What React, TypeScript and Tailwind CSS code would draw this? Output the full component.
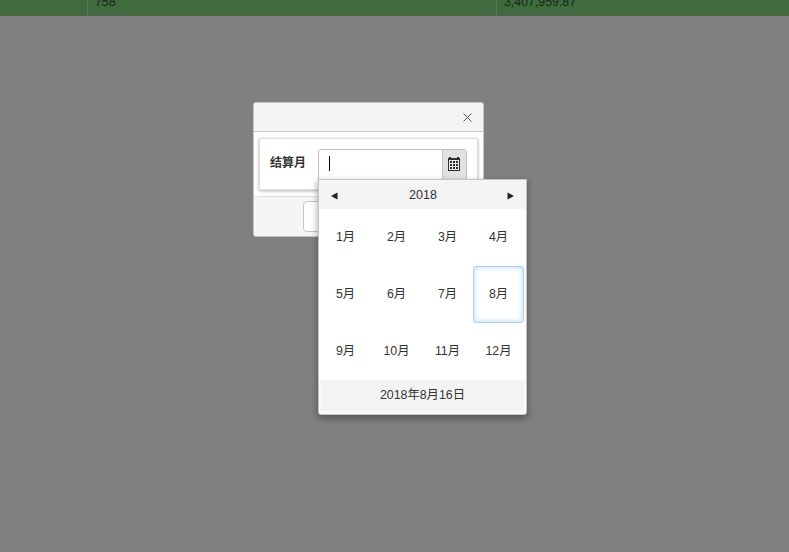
const months = ['1月', '2月', '3月', '4月', '5月', '6月', '7月', '8月', '9月', '10月', '11月', '12月'];

function CalendarIcon() {
  return (
    <svg width="12" height="14" viewBox="0 0 12 14" shapeRendering="crispEdges" fill="#2e2e2e">
      <path d="M0 1h1v-1h2v1h6v-1h2v1h1v13h-12zM1 3v10h10v-10z" fillRule="evenodd" />
      <path d="M1 3h10v10h-10z" fill="#f0f0f0" />
      {[4, 7, 10].map((y) => [2, 5, 8].map((x) => <rect key={`${x}-${y}`} x={x} y={y} width="2" height="2" />))}
    </svg>
  );
}

function MonthPicker() {
  return (
    <div className="absolute left-[318px] top-[179px] flex h-[236px] w-[209px] flex-col rounded-b-[3px] border border-[#c5c5c5] bg-[#f9f9f9] px-[2px] shadow-[0_3px_6px_1px_rgba(0,0,0,0.3)]">
      <div className="-mx-[2px] flex h-[30px] shrink-0 items-center justify-between bg-[#f4f4f4] px-[12px]">
        <svg width="7" height="8" viewBox="0 0 7 8" className="mt-[2px]"><path d="M6.5 0.5v7L0 4z" fill="#222" /></svg>
        <span className="pl-px text-[12.5px] leading-[30px]">2018</span>
        <svg width="7" height="8" viewBox="0 0 7 8" className="mt-[2px]"><path d="M0.5 0.5v7L7 4z" fill="#222" /></svg>
      </div>
      <div className="-ml-px grid h-[170px] w-[204px] shrink-0 grid-cols-4 grid-rows-[56px_57px_57px] bg-white outline-1 outline-white">
        {months.map((month) => (
          <div
            key={month}
            className={
              month === '8月'
                ? 'flex items-center justify-center rounded-[3px] border border-[#b2d0e8] bg-white pb-px shadow-[inset_0_0_4px_1px_#c3dff4]'
                : 'flex items-center justify-center pb-px'
            }
          >
            {month}
          </div>
        ))}
      </div>
      <div className="flex h-[30px] shrink-0 items-center justify-center border-b border-[#eeeeee] bg-[#f3f3f3] pt-[2px]">2018年8月16日</div>
    </div>
  );
}

export default function App() {
  return (
    <div className="relative h-[552px] w-[789px] overflow-hidden bg-[#808080] font-['Liberation_Sans','Noto_Sans_CJK_SC',sans-serif] text-[12.35px] text-[#333]">
      <div className="flex h-[16px] overflow-hidden border-b border-[#53674f] bg-[#3f6b3f] leading-[14px] text-[#172717]">
        <div className="w-[87px] shrink-0" />
        <div className="w-[409px] shrink-0 border-l border-[#5d755d] pl-[7px]"><span className="-mt-[5px] block">758</span></div>
        <div className="grow border-l border-[#5d755d] pl-[7px]"><span className="-mt-[5px] block">3,407,959.87</span></div>
      </div>
      <div className="absolute left-[253px] top-[102px] flex h-[135px] w-[231px] flex-col overflow-hidden rounded-[3px] border border-[#c5c5c5] bg-white">
        <div className="flex h-[29px] shrink-0 items-center justify-end border-b border-[#c9c9c9] bg-[#f4f4f4] pr-[11px]">
          <svg width="9" height="9" viewBox="0 0 9 9" stroke="#555" strokeWidth="1"><path d="M0.5 0.5l8 8M8.5 0.5l-8 8" /></svg>
        </div>
        <div className="h-[64px] shrink-0 px-[5px] pt-[6px]">
          <div className="flex h-[52px] items-start border border-[#dedede] pl-[10px] pt-[10px] shadow-[0_1px_3px_rgba(0,0,0,0.3)]">
            <label className="w-[48px] shrink-0 pt-[5px] text-[12px] font-bold leading-[18px]">结算月</label>
            <div className="flex h-[32px] w-[149px] shrink-0 overflow-hidden rounded-[3px] border border-[#bcbcbc] bg-white">
              <div className="grow pl-[10px] pt-[6px]"><div className="h-[15px] w-px bg-black" /></div>
              <div className="flex w-[24px] justify-center border-l border-[#c5c5c5] bg-[#e1e1e1] pr-px pt-[7px]"><CalendarIcon /></div>
            </div>
          </div>
        </div>
        <div className="grow border-t border-[#dcdcdc] bg-[#f5f5f5] pl-[49px] pt-[4px]">
          <div className="h-[31px] w-[80px] rounded-[4px] border border-[#c5c5c5] bg-white" />
        </div>
      </div>
      <MonthPicker />
    </div>
  );
}
